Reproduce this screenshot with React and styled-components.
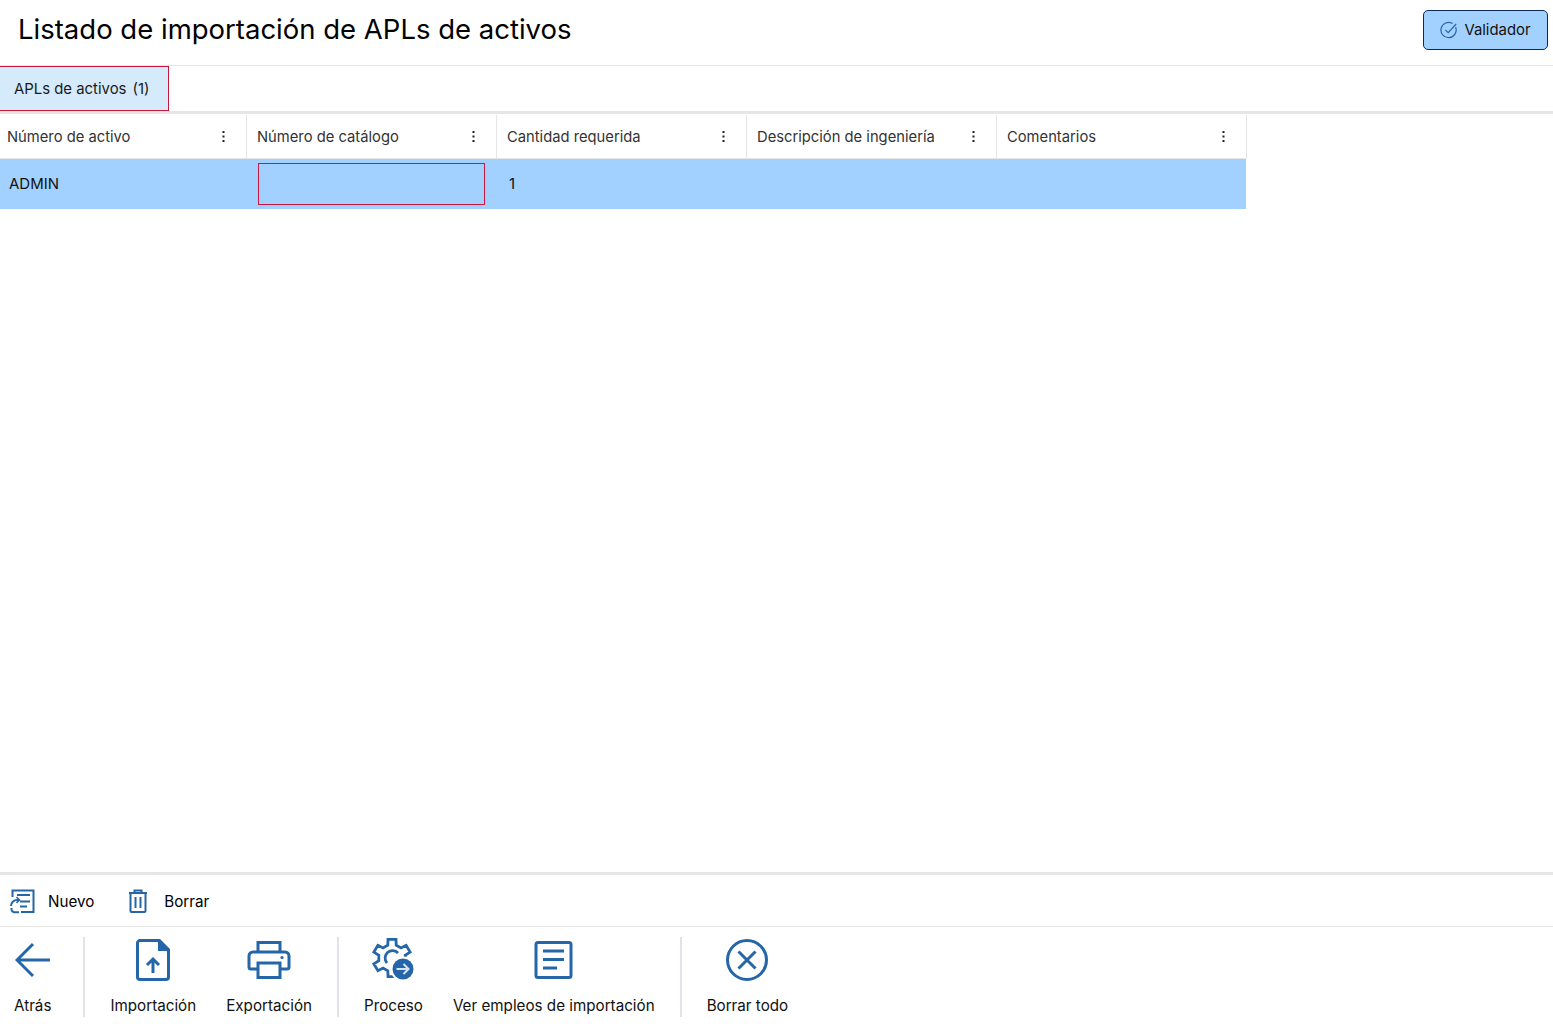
import React from 'react';
import styled, { createGlobalStyle } from 'styled-components';

const BLUE = '#2566a8';

const GlobalStyle = createGlobalStyle`
    html, body {
        margin: 0;
        padding: 0;
        background: #fff;
        font-family: Inter, "Liberation Sans", sans-serif;
        color: #111;
    }
    * {
        box-sizing: border-box;
    }
`;

const Page = styled.div`
    height: 100vh;
    display: flex;
    flex-direction: column;
    overflow: hidden;
`;

const Header = styled.header`
    height: 66px;
    flex: none;
    display: flex;
    align-items: flex-start;
    justify-content: space-between;
    padding: 10px 5px 0 18px;
    border-bottom: 1px solid #e6e6e6;
`;

const Title = styled.h1`
    margin: 0;
    font-size: 27.5px;
    line-height: 38px;
    font-weight: 400;
    color: #000;
`;

const ValidatorButton = styled.button`
    width: 125px;
    height: 40px;
    display: flex;
    align-items: center;
    justify-content: center;
    gap: 6px;
    padding: 0 0 1px;
    background: #a3d1ff;
    border: 1px solid #0b2a5c;
    border-radius: 5px;
    font-family: inherit;
    font-size: 14.9px;
    color: #111;
`;

const TabBar = styled.div`
    height: 45px;
    flex: none;
    display: flex;
`;

const Tab = styled.div`
    width: 169px;
    height: 45px;
    padding-left: 14px;
    display: flex;
    align-items: center;
    gap: 6px;
    background: #d5eafb;
    border: 1px solid #c8193c;
    border-left: none;
    font-size: 14.9px;
    color: #1a1a1a;
`;

const Main = styled.main`
    flex: 1;
    min-height: 0;
    border-top: 3px solid #e6e6e6;
    padding-top: 1px;
`;

const Grid = styled.div`
    width: 1247px;
`;

const HeaderRow = styled.div`
    display: grid;
    grid-template-columns: 247px repeat(4, 250px);
    height: 44px;
    border-bottom: 1px solid #e6e6e6;
`;

const HeaderCell = styled.div`
    display: flex;
    align-items: center;
    justify-content: space-between;
    padding: 0 19px 0 ${(props) => (props.$first ? '7px' : '10px')};
    border-right: 1px solid #e6e6e6;
    font-size: 14.75px;
    color: #333;
`;

const Dots = styled.svg`
    width: 3px;
    height: 11px;
    fill: #222;
    flex: none;
    margin-right: 2px;
`;

const DataRow = styled.div`
    display: grid;
    grid-template-columns: 247px repeat(4, 250px);
    width: 1246px;
    height: 50px;
    background: #a3d1ff;
`;

const DataCell = styled.div`
    display: flex;
    align-items: center;
    padding: 0 0 2px ${(props) => (props.$first ? '9px' : '12px')};
    font-size: 15px;
    color: #111;
`;

const EditBox = styled.div`
    width: 227px;
    height: 42px;
    margin: 4px 0 0 11px;
    border: 1px solid #c8193c;
`;

const ActionBar = styled.div`
    height: 55px;
    flex: none;
    display: flex;
    align-items: center;
    gap: 34px;
    padding-left: 10px;
    border-top: 3px solid #e6e6e6;
    border-bottom: 1px solid #e6e6e6;
`;

const ActionItem = styled.div`
    display: flex;
    align-items: center;
    gap: ${(props) => props.$gap}px;
    font-size: 15.2px;
    color: #000;
`;

const ActionLabel = styled.span`
    padding-top: 1px;
`;

const BottomBar = styled.div`
    height: 97px;
    flex: none;
    display: flex;
    align-items: flex-start;
    padding-top: 10px;
`;

const ToolItem = styled.div`
    height: 80px;
    display: flex;
    flex-direction: column;
    align-items: center;
    padding: 0 15px 0 ${(props) => props.$left || 15}px;
    font-size: 15.2px;
    color: #111;
    white-space: nowrap;
`;

const ToolIcon = styled.div`
    height: 46px;
    display: flex;
    align-items: center;
    justify-content: center;
    margin-bottom: 14px;
`;

const ToolLabel = styled.span`
    line-height: 18px;
`;

const Divider = styled.div`
    width: 2px;
    height: 80px;
    flex: none;
    background: #e2e2e8;
    margin: 0 10px 0 ${(props) => props.$left || 10}px;
`;

function CheckIcon() {
    return (
        <svg width="18" height="18" viewBox="0 0 18 18" fill="none" stroke={BLUE} strokeWidth="1.2">
            <path d="M15.6 6.2A7.6 7.6 0 1 1 12.6 2.6" />
            <path d="M5.4 8.8l2.8 2.8 8-8.6" />
        </svg>
    );
}

function NuevoIcon() {
    return (
        <svg width="26" height="26" viewBox="0 0 26 26" fill="none" stroke={BLUE} strokeWidth="2">
            <path d="M2.500 9V2.500H23.500V24H11" />
            <path d="M7 7h13M10 13.500h10M10 18.500h7" />
            <path d="M1 18a6 6 0 0 1 6-6h2" />
            <path d="M6.500 9l3 3-3 3" strokeWidth="1.600" />
            <path d="M9 24.200H4.500a3 3 0 0 1-3-3V20" />
        </svg>
    );
}

function TrashIcon() {
    return (
        <svg width="20" height="24" viewBox="0 0 20 24" fill="none" stroke={BLUE} strokeWidth="2">
            <path d="M1 4h18M6.500 4V1.500h7V4" />
            <path d="M2.500 4v18a1 1 0 0 0 1 1h13a1 1 0 0 0 1-1V4" />
            <path d="M7.500 8v11M12.500 8v11" />
        </svg>
    );
}

function ArrowIcon() {
    return (
        <svg width="36" height="36" viewBox="0 0 36 36" fill="none" stroke={BLUE} strokeWidth="3">
            <path d="M35 18H3M18 2L2 18l16 16" />
        </svg>
    );
}

function ImportIcon() {
    return (
        <svg width="36" height="44" viewBox="0 0 36 44" fill="none" stroke={BLUE} strokeWidth="3">
            <path d="M23 2.500H5a2.500 2.500 0 0 0-2.500 2.500v34A2.500 2.500 0 0 0 5 41.500h26a2.500 2.500 0 0 0 2.500-2.500V13z" />
            <path d="M23 1h2l10 10v2H23z" fill={BLUE} stroke="none" />
            <path d="M18 35V22M12 27l6-6 6 6" />
        </svg>
    );
}

function PrinterIcon() {
    return (
        <svg width="44" height="40" viewBox="0 0 44 40" fill="none" stroke={BLUE} strokeWidth="3">
            <path d="M11 12V2.500h22V12" />
            <path d="M10 29H4a2 2 0 0 1-2-2V16a4 4 0 0 1 4-4h32a4 4 0 0 1 4 4v11a2 2 0 0 1-2 2h-6" />
            <path d="M11 23h22v14.500H11z" />
            <circle cx="35" cy="17.500" r="1.600" fill={BLUE} stroke="none" />
        </svg>
    );
}

// engrenagem angular de 6 dentes: alterna raio externo e interno
const gearPath = (() => {
    const teeth = 6;
    const cx = 21;
    const cy = 20;
    const points = [];
    for (let i = 0; i < teeth; i++) {
        const a = (i * 2 * Math.PI) / teeth - Math.PI / 2;
        const step = (2 * Math.PI) / teeth;
        [[-0.3, 13.5], [-0.2, 19], [0.2, 19], [0.3, 13.5]].forEach(([f, r]) => {
            const t = a + f * step;
            points.push(`${(cx + r * Math.cos(t)).toFixed(1)} ${(cy + r * Math.sin(t)).toFixed(1)}`);
        });
    }
    return `M${points.join('L')}z`;
})();

function ProcessIcon() {
    return (
        <svg width="44" height="44" viewBox="0 0 44 44" fill="none" stroke={BLUE} strokeWidth="2.800">
            <path d={gearPath} />
            <path d="M16 25a7 7 0 0 1 11-10" />
            <circle cx="32" cy="31" r="12.500" fill="#fff" stroke="none" />
            <circle cx="32" cy="31" r="10.500" fill={BLUE} stroke="none" />
            <path d="M25.500 31h12M32.500 26l5 5-5 5" stroke="#d5e4f2" strokeWidth="2" />
        </svg>
    );
}

function ListIcon() {
    return (
        <svg width="40" height="40" viewBox="0 0 40 40" fill="none" stroke={BLUE} strokeWidth="3">
            <rect x="2" y="2.500" width="35" height="35" rx="2" />
            <path d="M9 11h21M9 19.500h21M9 28h14" />
        </svg>
    );
}

function CloseIcon() {
    return (
        <svg width="44" height="44" viewBox="0 0 44 44" fill="none" stroke={BLUE} strokeWidth="3">
            <circle cx="22" cy="22" r="19.500" />
            <path d="M13.500 13.500l17 17M30.500 13.500l-17 17" />
        </svg>
    );
}

const columns = [
    'Número de activo',
    'Número de catálogo',
    'Cantidad requerida',
    'Descripción de ingeniería',
    'Comentarios',
];

function App() {
    return (
        <Page>
            <GlobalStyle />
            <Header>
                <Title>Listado de importación de APLs de activos</Title>
                <ValidatorButton>
                    <CheckIcon />
                    Validador
                </ValidatorButton>
            </Header>

            <TabBar>
                <Tab>
                    <span>APLs de activos</span>
                    <span>(1)</span>
                </Tab>
            </TabBar>

            <Main>
                <Grid>
                    <HeaderRow>
                        {columns.map((col, index) => (
                            <HeaderCell key={col} $first={index === 0}>
                                {col}
                                <Dots viewBox="0 0 3 11">
                                    <rect x="0.500" y="0" width="2" height="2" />
                                    <rect x="0.500" y="4.500" width="2" height="2" />
                                    <rect x="0.500" y="9" width="2" height="2" />
                                </Dots>
                            </HeaderCell>
                        ))}
                    </HeaderRow>
                    <DataRow>
                        <DataCell $first>ADMIN</DataCell>
                        <div><EditBox /></div>
                        <DataCell>1</DataCell>
                    </DataRow>
                </Grid>
            </Main>

            <ActionBar>
                <ActionItem $gap={12}><NuevoIcon /><ActionLabel>Nuevo</ActionLabel></ActionItem>
                <ActionItem $gap={16}><TrashIcon /><ActionLabel>Borrar</ActionLabel></ActionItem>
            </ActionBar>

            <BottomBar>
                <ToolItem $left={14}>
                    <ToolIcon><ArrowIcon /></ToolIcon>
                    <ToolLabel>Atrás</ToolLabel>
                </ToolItem>
                <Divider $left={17} />
                <ToolItem>
                    <ToolIcon><ImportIcon /></ToolIcon>
                    <ToolLabel>Importación</ToolLabel>
                </ToolItem>
                <ToolItem>
                    <ToolIcon><PrinterIcon /></ToolIcon>
                    <ToolLabel>Exportación</ToolLabel>
                </ToolItem>
                <Divider />
                <ToolItem>
                    <ToolIcon><ProcessIcon /></ToolIcon>
                    <ToolLabel>Proceso</ToolLabel>
                </ToolItem>
                <ToolItem>
                    <ToolIcon><ListIcon /></ToolIcon>
                    <ToolLabel>Ver empleos de importación</ToolLabel>
                </ToolItem>
                <Divider />
                <ToolItem>
                    <ToolIcon><CloseIcon /></ToolIcon>
                    <ToolLabel>Borrar todo</ToolLabel>
                </ToolItem>
            </BottomBar>
        </Page>
    );
}

export default App;
